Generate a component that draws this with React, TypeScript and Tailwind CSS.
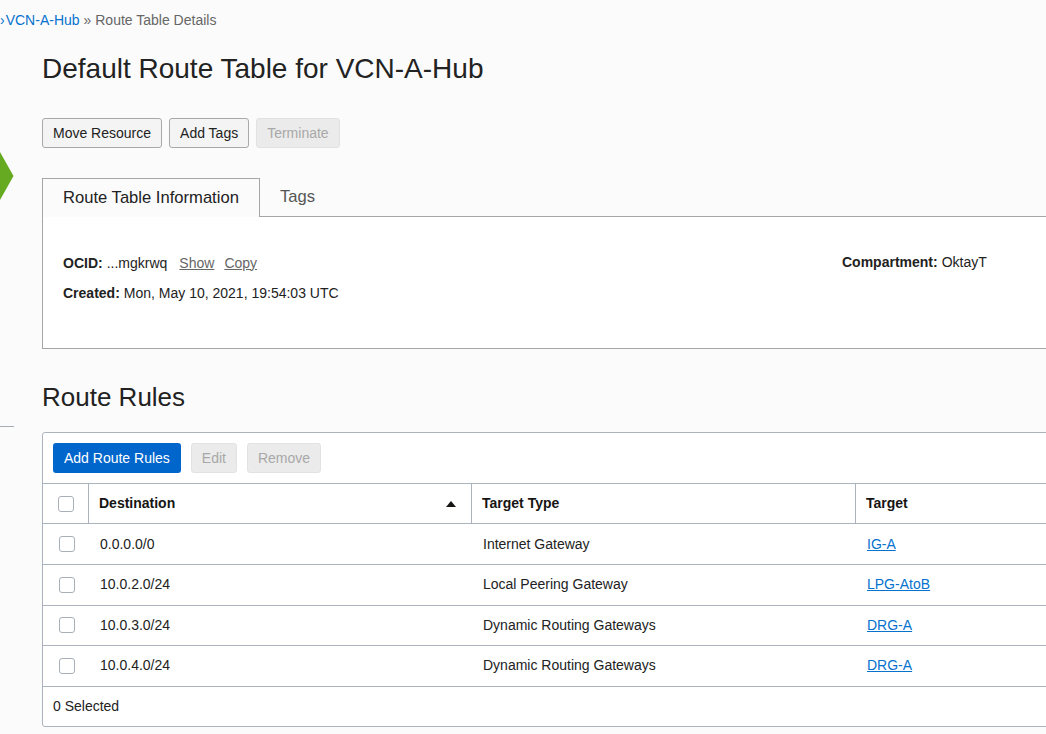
import React from 'react';

const rules = [
  { dest: '0.0.0.0/0', type: 'Internet Gateway', target: 'IG-A' },
  { dest: '10.0.2.0/24', type: 'Local Peering Gateway', target: 'LPG-AtoB' },
  { dest: '10.0.3.0/24', type: 'Dynamic Routing Gateways', target: 'DRG-A' },
  { dest: '10.0.4.0/24', type: 'Dynamic Routing Gateways', target: 'DRG-A' },
];

const Checkbox = () => (
  <span className="block h-4 w-4 rounded-[3px] border border-[#a7afb8] bg-white" />
);

const Button = ({ children, disabled }: { children: React.ReactNode; disabled?: boolean }) => (
  <button
    className={
      disabled
        ? 'h-[30px] rounded-[3px] border border-[#e2e2e2] bg-[#ebebeb] px-[10px] text-[14px] text-[#a8a8a8]'
        : 'h-[30px] rounded-[3px] border border-[#a9a9a9] bg-[#f4f4f4] px-[10px] text-[14px] text-[#222]'
    }
  >
    {children}
  </button>
);

export default function App() {
  return (
    <div className="h-[734px] w-[1046px] overflow-hidden bg-[#fbfbfb] font-['Liberation_Sans',Arial,sans-serif] text-[#222]">
      {/* Breadcrumb */}
      <div className="flex h-[40px] items-center text-[14px]">
        <span className="text-[#0572ce]">›</span>
        <span className="ml-[1px] text-[#0572ce]">VCN-A-Hub</span>
        <span className="ml-[4px] text-[#666]">» Route Table Details</span>
      </div>

      <div className="flex">
        {/* Cropped sidebar */}
        <div className="flex w-[42px] shrink-0 flex-col">
          <svg width="14" height="50" viewBox="0 0 14 50" className="mt-[112px]">
            <polygon points="0,0 13.5,24 0,48" fill="#66aa22" />
          </svg>
          <div className="mt-[224px] h-px w-[14px] bg-[#a6adb5]" />
        </div>

        {/* Main */}
        <div className="w-[1100px] shrink-0">
          <h1 className="mt-[12px] text-[28px] leading-[34px] text-[#222]">Default Route Table for VCN-A-Hub</h1>

          <div className="mt-[32px] flex gap-[7px]">
            <Button>Move Resource</Button>
            <Button>Add Tags</Button>
            <Button disabled>Terminate</Button>
          </div>

          {/* Tabs */}
          <div className="mt-[30px] flex">
            <div className="flex h-[39px] items-center border border-b-0 border-[#a6a6a6] bg-[#fbfbfb] px-[20px] text-[16.6px] text-[#222]">
              Route Table Information
            </div>
            <div className="flex h-[39px] flex-1 items-center border-b border-[#a6a6a6] pl-[20px] text-[16.6px] text-[#555]">
              Tags
            </div>
          </div>
          <div className="h-[132px] border border-t-0 border-[#a6a6a6] bg-white px-[20px] pt-[36px] text-[14px]">
            <div className="flex">
              <div className="w-[779px]">
                <div className="flex h-[20px] items-center">
                  <span className="font-bold">OCID:</span>
                  <span className="ml-[4px]">...mgkrwq</span>
                  <span className="ml-[12px] text-[#666] underline">Show</span>
                  <span className="ml-[10px] text-[#666] underline">Copy</span>
                </div>
                <div className="mt-[10px] flex h-[20px] items-center">
                  <span className="font-bold">Created:</span>
                  <span className="ml-[4px]">Mon, May 10, 2021, 19:54:03 UTC</span>
                </div>
              </div>
              <div className="flex h-[18px] items-center">
                <span className="font-bold">Compartment:</span>
                <span className="ml-[4px]">OktayT</span>
              </div>
            </div>
          </div>

          <h2 className="mt-[32px] text-[26px] leading-[32px] text-[#222]">Route Rules</h2>

          {/* Table */}
          <div className="mt-[19px] rounded-[3px] border border-[#aab3bc] bg-white">
            <div className="flex gap-[10px] p-[10px]">
              <button className="h-[30px] rounded-[3px] bg-[#0066cc] px-[11px] text-[14px] text-white">Add Route Rules</button>
              <Button disabled>Edit</Button>
              <Button disabled>Remove</Button>
            </div>
            <div className="flex h-[40px] items-stretch border-t border-[#aab3bc] text-[14px] font-bold text-[#161513]">
              <div className="flex w-[46px] items-center justify-center border-r border-[#aab3bc]">
                <Checkbox />
              </div>
              <div className="flex w-[383px] items-center justify-between border-r border-[#aab3bc] pl-[10px] pr-[15px]">
                <span>Destination</span>
                <svg width="10" height="6" viewBox="0 0 10 6">
                  <polygon points="5,0 10,6 0,6" fill="#161513" />
                </svg>
              </div>
              <div className="flex w-[384px] items-center border-r border-[#aab3bc] pl-[10px]">Target Type</div>
              <div className="flex flex-1 items-center pl-[10px]">Target</div>
            </div>
            {rules.map((r, i) => (
              <div
                key={i}
                className={`flex items-center border-t border-[#aab3bc] text-[14px] text-[#222] ${i === 0 ? 'h-[41px]' : 'h-[40.5px]'}`}
              >
                <div className="flex w-[47px] items-center justify-center">
                  <Checkbox />
                </div>
                <div className="w-[383px] pl-[10px]">{r.dest}</div>
                <div className="w-[384px] pl-[10px]">{r.type}</div>
                <div className="flex-1 pl-[10px]">
                  <span className="text-[#0572ce] underline">{r.target}</span>
                </div>
              </div>
            ))}
            <div className="flex h-[40px] items-center border-t border-[#aab3bc] pl-[10px] text-[14px] text-[#222]">
              0 Selected
            </div>
          </div>
        </div>
      </div>
    </div>
  );
}
